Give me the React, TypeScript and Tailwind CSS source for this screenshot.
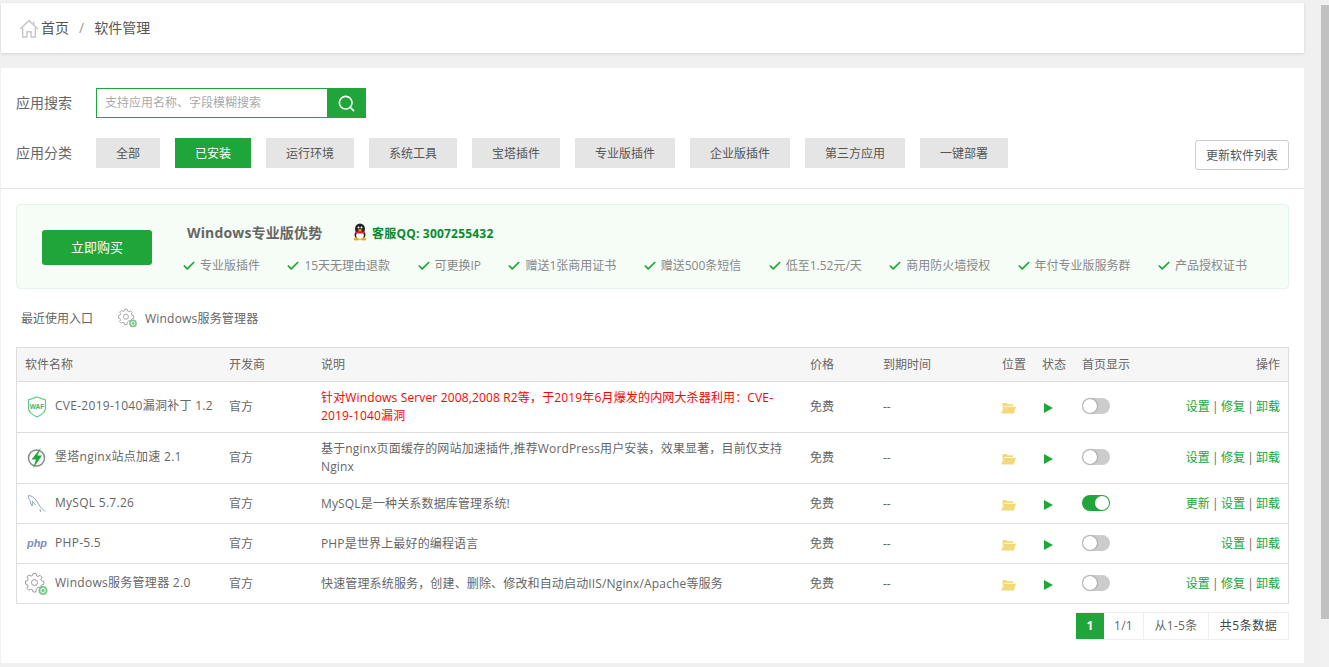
import { Check, Search } from 'lucide-react';

const font = 'font-["Open_Sans","Noto_Sans_CJK_SC","Liberation_Sans",sans-serif]';

const cats = [
  ['全部', 'w-16'],
  ['已安装', 'w-[76px]'],
  ['运行环境', 'w-[88px]'],
  ['系统工具', 'w-[88px]'],
  ['宝塔插件', 'w-[88px]'],
  ['专业版插件', 'w-[100px]'],
  ['企业版插件', 'w-[100px]'],
  ['第三方应用', 'w-[100px]'],
  ['一键部署', 'w-[88px]'],
];

const perks = ['专业版插件', '15天无理由退款', '可更换IP', '赠送1张商用证书', '赠送500条短信', '低至1.52元/天', '商用防火墙授权', '年付专业版服务群', '产品授权证书'];

function GearIcon({ size = 24 }: { size?: number }) {
  return (
    <svg width={size} height={size} viewBox="0 0 24 24" fill="none" className="shrink-0">
      <path d="M8 1.5h3l.5 2.3 1.6.7 2-1.2 2 2-1.2 2 .7 1.6 2.2.5v3l-2.2.5-.7 1.6.4.8H13a4 4 0 0 0-2 3.4l-.2 1.3H8l-.5-2.2-1.6-.7-2 1.2-2-2 1.2-2-.7-1.6L.5 12V9l2-.5.7-1.6-1.2-2 2-2 2 1.2 1.6-.7z" stroke="#999" strokeWidth="1" />
      <circle cx="9.5" cy="10.5" r="3" stroke="#999" strokeWidth="1" />
      <circle cx="18" cy="18.5" r="4.6" fill="#7ac98c" />
      <circle cx="18" cy="18.5" r="2.2" fill="none" stroke="#fff" strokeWidth="1" />
    </svg>
  );
}

function WafIcon() {
  return (
    <svg width="20" height="22" viewBox="0 0 20 22" fill="none">
      <path d="M10 1l8.5 3v8c0 4-4 7-8.5 9-4.5-2-8.5-5-8.5-9V4z" stroke="#5fc98a" strokeWidth="1.2" />
      <text x="10" y="12.5" textAnchor="middle" fontSize="6.5" fontWeight="700" fill="#3cb371" fontFamily="Liberation Sans">WAF</text>
    </svg>
  );
}

function BoltIcon() {
  return (
    <svg width="20" height="22" viewBox="0 0 20 22" fill="none">
      <circle cx="9.5" cy="11" r="8" stroke="#888" strokeWidth="1.5" />
      <path d="M14 0.5L4.5 12.5h4.5L6 21.5l9-13h-4.5z" fill="#22a53d" />
    </svg>
  );
}

function MysqlIcon() {
  return (
    <svg width="20" height="20" viewBox="0 0 20 20" fill="none" stroke="#7d98ab" strokeWidth="0.9">
      <path d="M1.5 1.5c3 .2 5.5 1.8 7.5 4.5 1.8 2.6 3.5 6 5.5 8 1 1 2.5 2 3.5 3.5" />
      <path d="M1.5 1.5c-.3 2 .5 3.5 1.5 5 .4 2 1 4 2.2 5.5.2-1.5 0-3 .3-4.5 1.2 1.5 2.5 3 3.500 3.500" />
      <path d="M13 15l.5 3" />
    </svg>
  );
}

function FolderIcon() {
  return (
    <svg width="15" height="12" viewBox="0 0 15 12" className="shrink-0 mt-[2px] -ml-px">
      <path d="M1.5 1h4l1 1.2h5.5V4H3.5L1.5 8z" fill="#f2da7a" />
      <path d="M3.5 4.8H15L12.8 11.5H0z" fill="#f2da7a" />
    </svg>
  );
}

function QQIcon() {
  return (
    <svg width="16" height="18" viewBox="0 0 16 18">
      <ellipse cx="8" cy="6" rx="5" ry="5.5" fill="#222" />
      <ellipse cx="8" cy="12" rx="5.5" ry="4.5" fill="#222" />
      <ellipse cx="8" cy="12.5" rx="3.8" ry="4" fill="#fff" />
      <path d="M3 8.5h10l-1 2H4z" fill="#e32119" />
      <path d="M5.5 7L8 6l2.5 1L8 8.2z" fill="#f5a81c" />
      <circle cx="6.5" cy="4.5" r="1" fill="#fff" />
      <circle cx="9.5" cy="4.5" r="1" fill="#fff" />
      <ellipse cx="4.5" cy="16.3" rx="3" ry="1.3" fill="#f5a81c" />
      <ellipse cx="11.5" cy="16.3" rx="3" ry="1.3" fill="#f5a81c" />
    </svg>
  );
}

function Toggle({ on }: { on?: boolean }) {
  return (
    <div className={`w-7 h-4 mb-[2px] rounded-full flex items-center px-px ${on ? 'bg-[#20a53a] justify-end' : 'bg-[#ccc] justify-start'}`}>
      <div className={`w-[14px] h-[14px] rounded-full bg-white ${on ? '' : 'shadow-[0_0_2px_rgba(0,0,0,0.5)]'}`} />
    </div>
  );
}

const rows = [
  { icon: <WafIcon />, name: 'CVE-2019-1040漏洞补丁 1.2', desc: <span className="text-[#f00]">针对Windows Server 2008,2008 R2等，于2019年6月爆发的内网大杀器利用：CVE-2019-1040漏洞</span>, ops: ['设置', '修复', '卸载'], h: 'h-[51px]' },
  { icon: <BoltIcon />, name: '堡塔nginx站点加速 2.1', desc: '基于nginx页面缓存的网站加速插件,推荐WordPress用户安装，效果显著，目前仅支持Nginx', ops: ['设置', '修复', '卸载'], h: 'h-[51px]' },
  { icon: <MysqlIcon />, name: 'MySQL 5.7.26', desc: 'MySQL是一种关系数据库管理系统!', ops: ['更新', '设置', '卸载'], on: true, h: 'h-10' },
  { icon: <span className="font-['Liberation_Sans'] text-[11px] font-bold italic text-[#7a8fc0]">php</span>, name: 'PHP-5.5', desc: 'PHP是世界上最好的编程语言', ops: ['设置', '卸载'], h: 'h-10' },
  { icon: <GearIcon size={24} />, name: 'Windows服务管理器 2.0', desc: '快速管理系统服务，创建、删除、修改和自动启动IIS/Nginx/Apache等服务', ops: ['设置', '修复', '卸载'], h: 'h-[39px]' },
];

const colCls = {
  name: 'w-[212px] shrink-0 pl-2',
  vendor: 'w-[92px] shrink-0',
  desc: 'w-[489px] shrink-0 pr-6',
  price: 'w-[73px] shrink-0',
  exp: 'w-[119px] shrink-0',
  pos: 'w-10 shrink-0',
  state: 'w-10 shrink-0',
  home: 'w-[70px] shrink-0',
  ops: 'flex-1 text-right pr-2',
};

export default function App() {
  return (
    <div className={`h-[667px] w-[1329px] overflow-hidden bg-[#f0f0f0] flex text-[12px] text-[#666] ${font}`}>
      <div className="w-[1303px] ml-px pt-[3px] shrink-0">
        <div className="h-[50px] bg-white shadow-[0_1px_3px_rgba(0,0,0,0.12)] flex items-center pl-[18px] text-[14px] text-[#555]">
          <svg width="20" height="19" viewBox="0 0 19 18" fill="none" stroke="#c8c8c8" strokeWidth="1.4" className="mr-[2px]">
            <path d="M1 9.5L9.5 1.5l8.5 8M3.5 8v9h4v-5h4v5h4V8M14 2.5v3" />
          </svg>
          <span className="pb-px">首页</span>
          <span className="ml-[10px] mr-[10px] pb-px text-[#999]">/</span>
          <span className="pb-px">软件管理</span>
        </div>

        <div className="mt-[15px] h-[595px] bg-white">
          <div className="h-[121px] border-b border-[#e4e4e4] px-[15px] pt-5 relative">
            <div className="flex items-center h-[30px]">
              <span className="w-20 text-[14px] pb-px">应用搜索</span>
              <div className="flex w-[270px] h-[30px]">
                <div className="flex-1 border border-r-0 border-[#20a53a] flex items-center pl-2 text-[#aaa]">支持应用名称、字段模糊搜索</div>
                <div className="w-[39px] bg-[#20a53a] flex items-center justify-center">
                  <Search size={19} color="#fff" strokeWidth={2} />
                </div>
              </div>
            </div>
            <div className="flex items-center h-[30px] mt-5">
              <span className="w-20 text-[14px] pb-px">应用分类</span>
              <div className="flex gap-[15px]">
                {cats.map(([c, w]) => (
                  <div key={c} className={`${w} h-[30px] pt-px flex items-center justify-center ${c === '已安装' ? 'bg-[#20a53a] text-white' : 'bg-[#e5e5e5] text-[#555]'}`}>{c}</div>
                ))}
              </div>
              <div className="ml-auto mt-[4px] w-[94px] h-[30px] mr-0 pt-px border border-[#ccc] rounded-[3px] flex items-center justify-center text-[#555]">更新软件列表</div>
            </div>
          </div>

          <div className="px-[15px] pt-[15px]">
            <div className="h-[85px] bg-[#f6fcf6] border border-[#e6f2ea] rounded-[4px] flex">
              <div className="w-[136px] shrink-0 pl-[25px] pt-[25px]">
                <div className="w-[110px] h-[35px] rounded-[3px] bg-[#20a53a] text-white text-[13px] flex items-center justify-center">立即购买</div>
              </div>
              <div className="flex-1 pl-[34px] pt-4">
                <div className="flex items-center h-[22px]">
                  <span className="text-[14px] font-bold text-[#666] w-[165px] tracking-[0.15px] whitespace-nowrap">Windows专业版优势</span>
                  <QQIcon />
                  <span className="ml-[4px] mt-[4px] font-bold text-[#0a8a2c] text-[12px] tracking-[0.2px]">客服QQ: 3007255432</span>
                </div>
                <div className="flex mt-3 ml-[-5px] h-[22px] items-center justify-between pr-[41px] text-[#888]">
                  {perks.map(p => (
                    <div key={p} className="flex items-center gap-[4px]">
                      <Check size={14} color="#20a53a" strokeWidth={3} />
                      <span>{p}</span>
                    </div>
                  ))}
                </div>
              </div>
            </div>

            <div className="flex items-center h-[28px] mt-[15px] pl-[5px]">
              <span className="mr-[25px] pt-px text-[#666]">最近使用入口</span>
              <GearIcon size={20} />
              <span className="ml-[7px] pt-px tracking-[0.2px]">Windows服务管理器</span>
            </div>

            <div className="mt-[15px] border border-[#ddd]">
              <div className="h-[34px] pt-px bg-[#f6f6f6] border-b border-[#ddd] flex items-center text-[#666]">
                <div className={colCls.name}>软件名称</div>
                <div className={colCls.vendor}>开发商</div>
                <div className={colCls.desc}>说明</div>
                <div className={colCls.price}>价格</div>
                <div className={colCls.exp}>到期时间</div>
                <div className={colCls.pos}>位置</div>
                <div className={colCls.state}>状态</div>
                <div className={colCls.home}>首页显示</div>
                <div className={colCls.ops}>操作</div>
              </div>
              {rows.map((r, i) => (
                <div key={i} className={`${r.h} flex items-center ${i < rows.length - 1 ? 'border-b border-[#ddd]' : ''}`}>
                  <div className={`${colCls.name} flex items-center`}>
                    <div className="w-[30px] shrink-0 flex items-center justify-center pr-[6px]">{r.icon}</div>
                    <span className="whitespace-nowrap pb-[2px] tracking-[0.28px]">{r.name}</span>
                  </div>
                  <div className={colCls.vendor}>官方</div>
                  <div className={`${colCls.desc} leading-[18px] tracking-[0.15px]`}>{r.desc}</div>
                  <div className={colCls.price}>免费</div>
                  <div className={colCls.exp}>--</div>
                  <div className={colCls.pos}><FolderIcon /></div>
                  <div className={colCls.state}>
                    <div className="w-0 h-0 mt-[2px] border-y-[5px] border-y-transparent border-l-[9px] border-l-[#20a53a] ml-[2px]" />
                  </div>
                  <div className={colCls.home}><Toggle on={r.on} /></div>
                  <div className={`${colCls.ops} text-[#20a53a]`}>
                    {r.ops.map((o, j) => (
                      <span key={o}>
                        {j > 0 && <span className="mx-[2.25px] text-[#666]">|</span>}
                        {o}
                      </span>
                    ))}
                  </div>
                </div>
              ))}
            </div>

            <div className="flex justify-end mt-2">
              <div className="flex h-7 border border-l-0 border-[#eee]">
                <div className="w-[28px] bg-[#20a53a] text-white flex items-center justify-center font-bold">1</div>
                <div className="w-10 border-r border-[#eee] flex items-center justify-center tracking-[0.3px]">1/1</div>
                <div className="w-[65px] border-r border-[#eee] flex items-center justify-center tracking-[0.3px]">从1-5条</div>
                <div className="w-[79px] flex items-center justify-center text-[#444] tracking-[0.5px]">共5条数据</div>
              </div>
            </div>
          </div>
        </div>
      </div>

      <div className="ml-auto w-2 h-full bg-[#f1f1f1] pt-[5px]">
        <div className="h-[614px] bg-[#c1c1c1]" />
      </div>
    </div>
  );
}
